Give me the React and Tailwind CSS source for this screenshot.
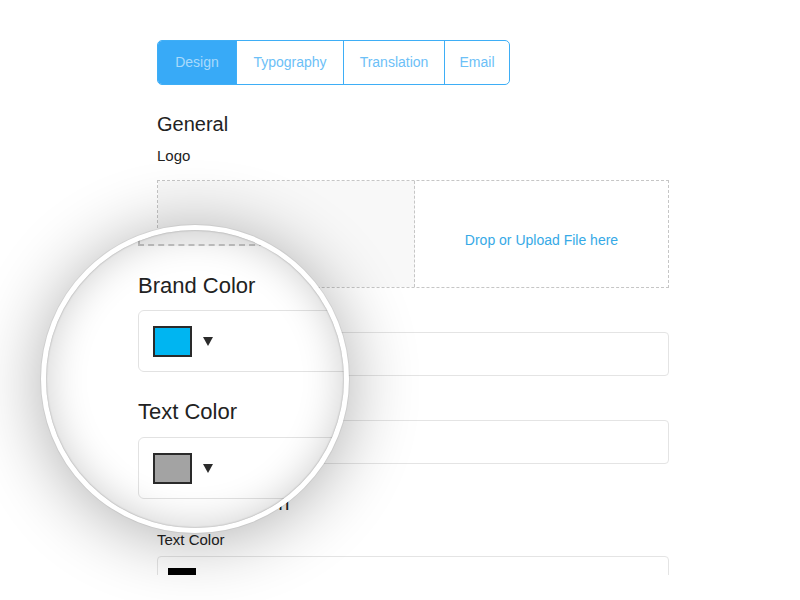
import React from "react";

const tabs = [
  { label: "Design", w: "w-[78px]", active: true },
  { label: "Typography", w: "w-[107px]" },
  { label: "Translation", w: "w-[101px]" },
  { label: "Email", w: "flex-1" },
];

const Caret = ({ size = 10 }) => (
  <svg width={size} height={size} viewBox="0 0 10 10">
    <polygon points="0,1 10,1 5,10" fill="#2b2b2b" />
  </svg>
);

const PageInput = ({ swatch }) => (
  <div className="mt-[7px] flex h-[44px] items-center rounded-[4px] border border-[#e4e4e4] pl-[9px]">
    <div className={`h-[20px] w-[28px] border border-[#222] ${swatch}`} />
    <span className="ml-[8px]">
      <Caret size={7} />
    </span>
  </div>
);

const LensInput = ({ swatch }) => (
  <div className="flex h-[62px] w-[520px] items-center rounded-[6px] border border-[#e2e2e2] pl-[14px]">
    <div className={`h-[31px] w-[39px] border-2 border-[#2a2a2a] ${swatch}`} />
    <span className="ml-[11px]">
      <Caret />
    </span>
  </div>
);

export default function App() {
  return (
    <div className="relative h-[600px] w-[800px] overflow-hidden bg-white font-['Liberation_Sans',Arial,sans-serif] text-[#222]">
      {/* page */}
      <div className="h-[575px] overflow-hidden pl-[157px] pt-[40px]">
        <div className="w-[512px]">
          <div className="flex h-[45px] w-[353px] overflow-hidden rounded-[5px] border border-[#3eaef6] text-[14px]">
            {tabs.map((t, i) => (
              <div
                key={t.label}
                className={`flex items-center justify-center ${t.w} ${
                  i > 0 ? "border-l border-[#3eaef6]" : ""
                } ${t.active ? "bg-[#38aaf7] text-[#a9dafb]" : "text-[#6cc0f7]"}`}
              >
                {t.label}
              </div>
            ))}
          </div>

          <h2 className="mt-[27px] text-[20px] leading-[24px]">General</h2>
          <p className="mt-[10px] text-[15px] leading-[20px]">Logo</p>

          <div className="mt-[14px] flex h-[108px] border border-dashed border-[#c6c6c6]">
            <div className="w-[257px] border-r border-dashed border-[#c6c6c6] bg-[#f8f8f8]" />
            <div className="flex flex-1 items-center justify-center pt-[12px] text-[14px] text-[#36a9e6]">
              Drop or Upload File here
            </div>
          </div>

          <p className="mt-[17px] text-[15px] leading-[20px]">Brand Color</p>
          <PageInput swatch="bg-[#00b5f1]" />

          <p className="mt-[17px] text-[15px] leading-[20px]">Text Color</p>
          <PageInput swatch="bg-[#a3a3a3]" />

          <h3 className="mt-[27px] text-[20px] leading-[24px]">Primary Button</h3>

          <p className="mt-[15px] text-[15px] leading-[20px]">Text Color</p>
          <div className="mt-[6px] flex h-[44px] items-center rounded-[4px] border border-[#e4e4e4] pl-[10px]">
            <div className="h-[20px] w-[28px] bg-black" />
          </div>
        </div>
      </div>

      {/* magnifier */}
      <div className="absolute left-[41px] top-[225px] h-[308px] w-[308px] rounded-full border-[5px] border-white bg-white shadow-[0_0_0_1px_rgba(0,0,0,0.06),0_6px_70px_rgba(0,0,0,0.32)]">
        <div className="h-full w-full overflow-hidden rounded-full">
          <div className="w-[640px] pl-[92px]">
            <div className="h-[16px] w-[420px] border-b-2 border-l-2 border-dashed border-[#c4c4c4] bg-[#f7f7f7]" />
            <p className="mt-[27px] text-[22px] leading-[26px]">Brand Color</p>
            <div className="mt-[11px]">
              <LensInput swatch="bg-[#00b5f1]" />
            </div>
            <p className="mt-[27px] text-[22px] leading-[26px]">Text Color</p>
            <div className="mt-[12px]">
              <LensInput swatch="bg-[#a3a3a3]" />
            </div>
          </div>
        </div>
        <div className="pointer-events-none absolute inset-0 rounded-full shadow-[inset_0_0_2px_rgba(0,0,0,0.35),inset_0_0_40px_rgba(0,0,0,0.2)]" />
      </div>
    </div>
  );
}
